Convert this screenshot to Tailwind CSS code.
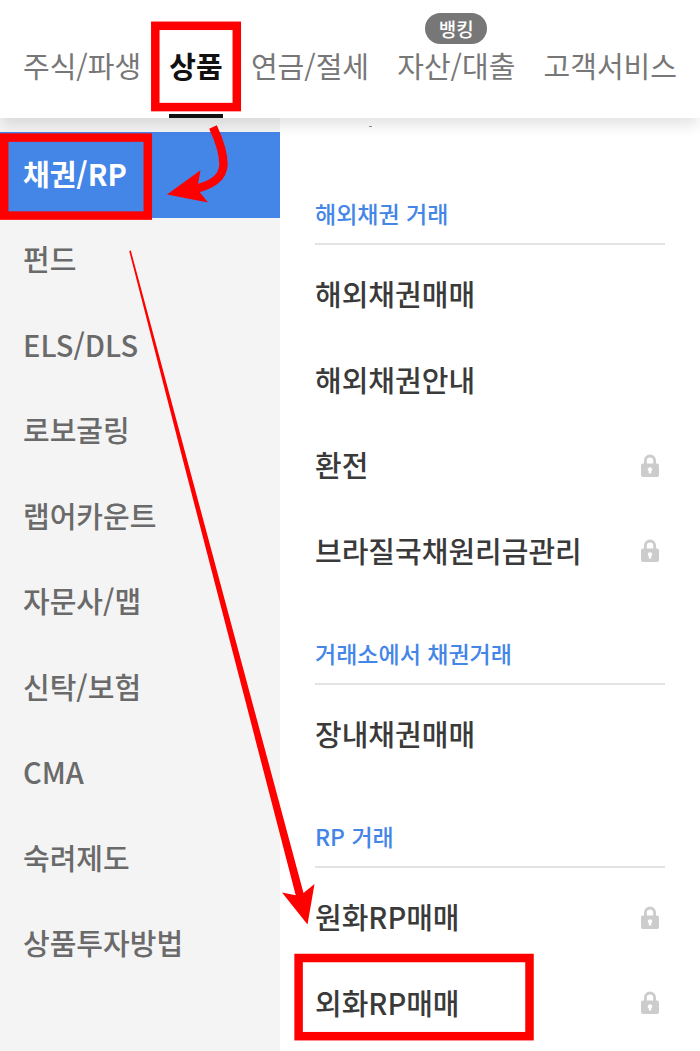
<!DOCTYPE html>
<html lang="ko">
<head>
  <meta charset="utf-8"/>
  <meta name="viewport" content="width=device-width, initial-scale=1"/>
  <title>상품 - 채권/RP</title>
  <script src="https://cdn.jsdelivr.net/npm/@tailwindcss/browser@4"></script>
</head>
<body class="relative flex min-h-screen flex-col overflow-x-hidden bg-white font-['Noto_Sans_CJK_KR',sans-serif] text-[29px] text-[#3a3a3a]">

  <!-- lock icon, used by the menu rows -->
  <svg class="hidden">
    <symbol id="lock" viewBox="0 0 18 23">
      <path d="M4.4 11V6.6a4.6 4.6 0 0 1 9.200 0V11" fill="none" stroke="currentColor" stroke-width="2.800"/>
      <path fill="currentColor" fill-rule="evenodd" d="M2 9.500h14a2 2 0 0 1 2 2V21a2 2 0 0 1-2 2H2a2 2 0 0 1-2-2V11.500a2 2 0 0 1 2-2zM9 13.200a2.200 2.200 0 0 0-1.200 4.100V19.500h2.400V17.300A2.200 2.200 0 0 0 9 13.200z"/>
    </symbol>
  </svg>

  <header class="relative z-10 bg-white shadow-[0_10px_12px_-2px_rgba(0,0,0,0.1)]">
    <nav class="flex h-[118px] items-stretch justify-between px-[23px] leading-[130px] whitespace-nowrap text-[#777]">
      <a href="#">주식/파생</a>
      <a href="#" class="border-b-4 border-[#111] font-bold text-[#111]" aria-current="page">상품</a>
      <a href="#">연금/절세</a>
      <a href="#" class="relative">
        <span class="absolute top-[13px] left-1/2 flex h-[31px] w-[62px] -translate-x-1/2 items-center justify-center rounded-full bg-[#777] text-[19px] leading-none font-medium text-white">뱅킹</span>
        자산/대출
      </a>
      <a href="#">고객서비스</a>
    </nav>
  </header>

  <div class="flex flex-1">
    <aside class="w-2/5 bg-[#f4f4f4] pt-[14px] font-medium text-[#6a6a6a]">
      <ul>
        <li class="flex h-[86px] items-center bg-[#4485e8] px-[23px] pb-[3px] font-bold text-white"><a href="#" aria-current="page">채권/RP</a></li>
        <li class="flex h-[85px] items-center px-[23px] pb-[3px]"><a href="#">펀드</a></li>
        <li class="flex h-[86px] items-center px-[23px] pb-[3px]"><a href="#">ELS/DLS</a></li>
        <li class="flex h-[85px] items-center px-[23px] pb-[3px]"><a href="#">로보굴링</a></li>
        <li class="flex h-[86px] items-center px-[23px] pb-[3px]"><a href="#">랩어카운트</a></li>
        <li class="flex h-[85px] items-center px-[23px] pb-[3px]"><a href="#">자문사/맵</a></li>
        <li class="flex h-[86px] items-center px-[23px] pb-[3px]"><a href="#">신탁/보험</a></li>
        <li class="flex h-[85px] items-center px-[23px] pb-[3px]"><a href="#">CMA</a></li>
        <li class="flex h-[86px] items-center px-[23px] pb-[3px]"><a href="#">숙려제도</a></li>
        <li class="flex h-[85px] items-center px-[23px] pb-[3px]"><a href="#">상품투자방법</a></li>
      </ul>
    </aside>

    <main class="flex-1 px-[35px] font-medium">
      <!-- tail of the row scrolled under the header -->
      <div class="relative z-20 h-[37px] pt-2 pl-[54px]"><div class="h-px w-[3px] bg-[#888]"></div></div>

      <section>
        <h2 class="mt-10 border-b-2 border-[#e3e3e3] pb-3 text-[23px] leading-[36px] text-[#4485e8]">해외채권 거래</h2>
        <ul class="pt-2">
          <li class="flex h-[85px] items-center pb-[3px]"><a href="#">해외채권매매</a></li>
          <li class="flex h-[86px] items-center pb-[3px]"><a href="#">해외채권안내</a></li>
          <li class="flex h-[85px] items-center justify-between pr-[6px] pb-[3px]"><a href="#">환전</a><svg class="h-[23px] w-[18px] text-[#ccc]"><use href="#lock"/></svg></li>
          <li class="flex h-[86px] items-center justify-between pr-[6px] pb-[3px]"><a href="#">브라질국채원리금관리</a><svg class="h-[23px] w-[18px] text-[#ccc]"><use href="#lock"/></svg></li>
        </ul>
      </section>

      <section>
        <h2 class="mt-10 border-b-2 border-[#e3e3e3] pb-3 text-[23px] leading-[36px] text-[#4485e8]">거래소에서 채권거래</h2>
        <ul class="pt-2">
          <li class="flex h-[85px] items-center pb-[3px]"><a href="#">장내채권매매</a></li>
        </ul>
      </section>

      <section>
        <h2 class="mt-10 border-b-2 border-[#e3e3e3] pb-3 text-[23px] leading-[36px] text-[#4485e8]">RP 거래</h2>
        <ul class="pt-2">
          <li class="flex h-[85px] items-center justify-between pr-[6px] pb-[3px]"><a href="#">원화RP매매</a><svg class="h-[23px] w-[18px] text-[#ccc]"><use href="#lock"/></svg></li>
          <li class="flex h-[86px] items-center justify-between pr-[6px] pb-[3px]"><a href="#">외화RP매매</a><svg class="h-[23px] w-[18px] text-[#ccc]"><use href="#lock"/></svg></li>
        </ul>
      </section>
    </main>
  </div>

  <!-- red marks that show the path: 상품 > 채권/RP > 외화RP매매 -->
  <svg class="pointer-events-none absolute top-0 left-0 z-30" width="700" height="1051" viewBox="0 0 700 1051" fill="none">
    <g stroke="#f00" stroke-width="8.500">
      <rect x="155.300" y="25.800" width="81.500" height="81.300"/>
      <rect x="4.200" y="137.600" width="143.600" height="78"/>
      <rect x="298.600" y="958" width="230.900" height="78.200"/>
      <path d="M213 127C221 144 223.500 155 223.500 165C222.500 178 213 184.500 197 188.500"/>
    </g>
    <path fill="#f00" d="M167 194.500L200.500 170.300L198 184L200 192.500L208 202.500z"/>
    <path fill="#f00" d="M129.200 251L130.800 250.500L184.500 450L303.500 893L314.500 884L307.500 924.500L282 892.500L295.700 895.300L180.300 450z"/>
  </svg>
</body>
</html>
